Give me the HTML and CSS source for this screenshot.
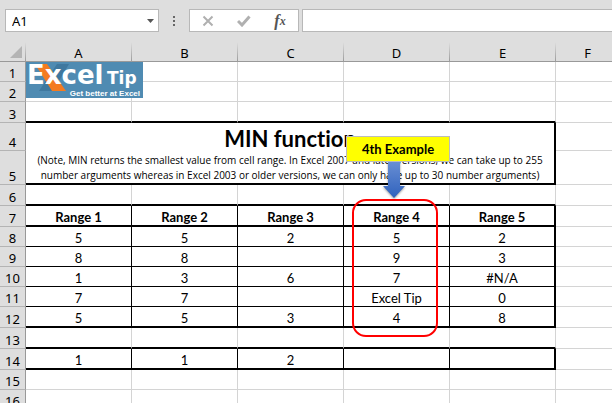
FILE: index.html
```
<!DOCTYPE html>
<html lang="en">
<head>
    <meta charset="UTF-8">
    <meta name="viewport" content="width=device-width, initial-scale=1.0">
    <title>MIN function</title>
    <link rel="stylesheet" href="styles.css">
</head>
<body>
    <div class="toolbar">
      <div class="name-box">
        <input class="name-box-input" type="text" aria-label="Name box" value="A1">
        <button class="name-box-button" type="button" aria-label="Show names">
          <svg width="7" height="4" viewBox="0 0 7 4"><path d="M0 0h7L3.5 4z" fill="#555"/></svg>
        </button>
      </div>
      <svg class="toolbar-grip" width="2" height="10" viewBox="0 0 2 10"><path d="M0 0h2v2H0zM0 4h2v2H0zM0 8h2v2H0z" fill="#666"/></svg>
      <div class="formula-actions">
        <button class="formula-button" type="button" aria-label="Cancel">
          <svg width="12" height="12" viewBox="0 0 12 12"><path d="M1.5 1.5l9 9M10.5 1.5l-9 9" stroke="#b0b0b0" stroke-width="2" fill="none"/></svg>
        </button>
        <button class="formula-button" type="button" aria-label="Enter">
          <svg width="14" height="12" viewBox="0 0 14 12"><path d="M1 6l4 4 7.5-8.5" stroke="#b0b0b0" stroke-width="3" fill="none"/></svg>
        </button>
        <button class="formula-button formula-button-function" type="button" aria-label="Insert function"><i>f</i><small>x</small></button>
      </div>
      <input class="formula-input" type="text" aria-label="Formula">
    </div>

    <main class="sheet">
      <table class="grid">
        <colgroup>
          <col class="col-number">
          <col class="col-data" span="5">
          <col class="col-last">
        </colgroup>
        <thead>
          <tr>
            <th class="corner"><svg width="12" height="12" viewBox="0 0 12 12"><path d="M12 0v12H0z" fill="#b4b4b4"/></svg></th>
            <th>A</th><th>B</th><th>C</th><th>D</th><th>E</th><th>F</th>
          </tr>
        </thead>
        <tbody>
          <tr><th>1</th><td></td><td></td><td></td><td></td><td></td><td></td></tr>
          <tr><th>2</th><td></td><td></td><td></td><td></td><td></td><td></td></tr>
          <tr class="row-tall row-thick"><th>3</th><td></td><td></td><td></td><td></td><td></td><td></td></tr>
          <tr class="row-title"><th>4</th><td class="title" colspan="5">MIN function</td><td></td></tr>
          <tr class="row-note row-thick"><th>5</th><td class="note" colspan="5">(Note, MIN returns the smallest value from cell range. In Excel 2007 and later versions, we can take up to 255<br>number arguments whereas in Excel 2003 or older versions, we can only have up to 30 number arguments)</td><td></td></tr>
          <tr class="row-tall row-thick"><th>6</th><td></td><td></td><td></td><td></td><td></td><td></td></tr>
          <tr class="row-tall row-thick row-data row-names"><th>7</th><td>Range 1</td><td>Range 2</td><td>Range 3</td><td>Range 4</td><td>Range 5</td><td></td></tr>
          <tr class="row-data"><th>8</th><td>5</td><td>5</td><td>2</td><td>5</td><td>2</td><td></td></tr>
          <tr class="row-data"><th>9</th><td>8</td><td>8</td><td></td><td>9</td><td>3</td><td></td></tr>
          <tr class="row-data"><th>10</th><td>1</td><td>3</td><td>6</td><td>7</td><td>#N/A</td><td></td></tr>
          <tr class="row-data"><th>11</th><td>7</td><td>7</td><td></td><td>Excel Tip</td><td>0</td><td></td></tr>
          <tr class="row-tall row-thick row-data"><th>12</th><td>5</td><td>5</td><td>3</td><td>4</td><td>8</td><td></td></tr>
          <tr class="row-tall row-thick"><th>13</th><td></td><td></td><td></td><td></td><td></td><td></td></tr>
          <tr class="row-tall row-thick row-data"><th>14</th><td>1</td><td>1</td><td>2</td><td></td><td></td><td></td></tr>
          <tr><th>15</th><td></td><td></td><td></td><td></td><td></td><td></td></tr>
          <tr><th>16</th><td></td><td></td><td></td><td></td><td></td><td></td></tr>
        </tbody>
      </table>

      <!-- floating objects over the cells -->
      <svg class="logo" width="117" height="36" viewBox="0 0 117 36" role="img" aria-label="Excel Tip">
        <rect width="117" height="36" fill="#4f8bb2"/>
        <path d="M31 2h12L27 29H13z" fill="#3f789f"/>
        <path d="M9 2h12l19 27H26z" fill="#f47b20"/>
        <text class="logo-name" x="1" y="22">Excel</text>
        <text class="logo-tip" x="81" y="22">Tip</text>
        <text class="logo-slogan" x="114" y="34" text-anchor="end">Get better at Excel</text>
      </svg>
      <div class="highlight"></div>
      <svg class="arrow" width="26" height="42" viewBox="0 0 26 42">
        <defs>
          <linearGradient id="arrow-fill" x1="0" y1="0" x2="0" y2="1">
            <stop offset="0" stop-color="#6a8fd4"/>
            <stop offset="1" stop-color="#2f62bd"/>
          </linearGradient>
        </defs>
        <path d="M7 0h12v25h5L13 37 2 25h5z" fill="url(#arrow-fill)"/>
      </svg>
      <div class="callout">4th Example</div>
    </main>
</body>
</html>
```
FILE: styles.css
```
html,
body {
  height: 100%;
}

body {
  display: flex;
  flex-direction: column;
  box-sizing: border-box;
  margin: 0;
  padding-top: 9px;
  overflow: hidden;

  font-family: "Lato", sans-serif;
  font-size: 13px;
  line-height: 16px;
  font-variant-ligatures: none;
  color: #000000;
  background-color: #dedede;
}

.toolbar {
  display: flex;
  flex-shrink: 0;
  align-items: center;
  height: 23px;
  margin-bottom: 10px;
  padding-left: 5px;
}

.name-box,
.formula-actions,
.formula-input {
  box-sizing: border-box;
  height: 23px;

  background-color: #ffffff;
  border: 1px solid #b8b8b8;
}

.name-box {
  display: flex;
  width: 154px;
}

.name-box-input {
  flex-grow: 1;
  min-width: 0;
  padding: 0 6px;

  font-family: "Noto Sans", sans-serif;
  font-size: 13px;

  background: none;
  border: none;
  outline: none;
}

.name-box-button {
  display: flex;
  align-items: center;
  justify-content: center;
  width: 21px;
  padding: 0;

  background: none;
  border: none;
}

.toolbar-grip {
  margin: 0 14px;
}

.formula-actions {
  display: flex;
  width: 110px;
  margin-right: 3px;
}

.formula-button {
  display: flex;
  flex: 1;
  align-items: center;
  justify-content: center;
  padding: 0;

  background: none;
  border: none;
}

.formula-button-function {
  font-family: "Liberation Serif", serif;
  font-size: 16px;
  font-weight: 700;
  line-height: 20px;
  color: #555555;
}

.formula-button-function small {
  font-size: 12px;
  font-style: italic;
}

.formula-input {
  flex: 1;
  min-width: 0;
  padding: 0 6px;

  font: inherit;

  border-right: none;
  outline: none;
}

.sheet {
  position: relative;
  flex: 1;
  min-height: 0;
  overflow: hidden;
}

.grid {
  width: 620px;

  table-layout: fixed;
  border-collapse: separate;
  border-spacing: 0;
}

.col-number {
  width: 26px;
}

.col-data {
  width: 106px;
}

.col-last {
  width: 64px;
}

.grid tr {
  height: 20px;
}

.grid .row-tall {
  height: 21px;
}

.grid .row-title {
  height: 28px;
}

.grid .row-note {
  height: 34px;
}

.grid th,
.grid td {
  box-sizing: border-box;
  padding: 0;

  text-align: center;
  vertical-align: bottom;

  border-right: 1px solid #d4d4d4;
  border-bottom: 1px solid #d4d4d4;
}

.grid td {
  background-color: #ffffff;
}

.grid th {
  font-family: "Noto Sans", sans-serif;
  font-weight: 400;

  border-right-color: #999999;
  border-bottom-color: #b4b4b4;
}

.grid thead th {
  background-image: linear-gradient(#dedede, #999999);
  background-repeat: no-repeat;
  background-position: right;
  background-size: 1px 100%;
  background-origin: border-box;
  border-right-color: transparent;
  border-bottom-color: #999999;
}

.grid .corner {
  padding-right: 3px;

  line-height: 0;
  text-align: right;
}

.corner svg {
  margin-bottom: 3px;
}

.row-thick td:not(:last-child) {
  border-bottom: 2px solid #000000;
}

.row-data td:not(:last-child) {
  border-right-color: #000000;
  border-bottom-color: #000000;
}

.row-data td:nth-last-child(2),
.row-title .title,
.row-note .note {
  border-right: 2px solid #000000;
}

.row-names td {
  font-weight: 700;
}

.grid .title {
  font-size: 22px;
  font-weight: 700;
  line-height: 24px;

  border-bottom: none;
}

.grid .note {
  font-family: "Open Sans", sans-serif;
  font-size: 10px;
  line-height: 15px;
  white-space: nowrap;
}

.logo {
  position: absolute;
  top: 20px;
  left: 26px;
}

.logo text {
  font-weight: 700;

  fill: #ffffff;
}

.logo .logo-name {
  font-family: "DejaVu Sans", sans-serif;
  font-size: 26px;
}

.logo .logo-tip {
  font-family: "DejaVu Sans", sans-serif;
  font-size: 17px;
}

.logo .logo-slogan {
  font-family: "Liberation Sans", sans-serif;
  font-size: 8px;
}

.callout {
  position: absolute;
  top: 94px;
  left: 346px;
  box-sizing: border-box;
  width: 104px;
  height: 26px;

  font-weight: 700;
  line-height: 25px;
  text-align: center;

  background-color: #ffff00;
  border: 1px solid #bcbcbc;
}

.arrow {
  position: absolute;
  top: 119px;
  left: 381px;

  filter: drop-shadow(0 1px 1px rgba(0, 0, 0, 0.4));
}

.highlight {
  position: absolute;
  top: 157px;
  left: 352px;
  box-sizing: border-box;
  width: 86px;
  height: 138px;

  border: 2px solid #ff0000;
  border-radius: 14px;
}
```
